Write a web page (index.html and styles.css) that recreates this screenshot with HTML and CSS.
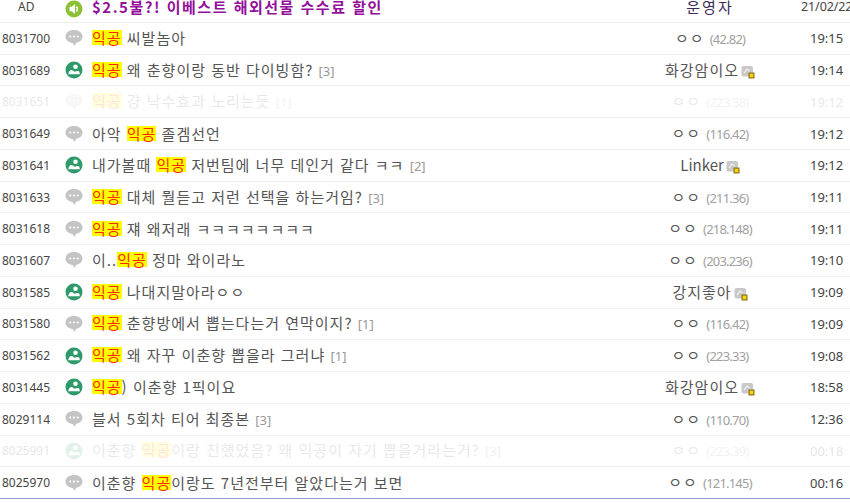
FILE: index.html
```html
<!DOCTYPE html>
<html lang="ko">

<head>
    <meta charset="UTF-8">
    <title>게시글 목록</title>
    <link rel="stylesheet" href="styles.css">
</head>

<body>
    <svg class="defs" width="0" height="0">
        <symbol id="icon-talk" viewBox="0 0 18 18">
            <path d="M9 1C4.2 1 .5 3.6.5 7.6c0 3.6 3.2 6.2 7 6.5l2.6 3 .6-3.1c3.8-.5 6.8-3 6.8-6.4C17.500 3.600 13.800 1 9 1z" fill="#c4c4c4"/>
            <circle cx="5.200" cy="7.500" r="1.100" fill="#fff"/>
            <circle cx="9" cy="7.500" r="1.100" fill="#fff"/>
            <circle cx="12.800" cy="7.500" r="1.100" fill="#fff"/>
        </symbol>
        <symbol id="icon-pic" viewBox="0 0 18 18">
            <circle cx="9" cy="9" r="8.500" fill="#2f9a69"/>
            <circle cx="10.500" cy="5.800" r="2.300" fill="#fff"/>
            <path d="M3.200 13.300c.3-2.100 1.700-4.200 3.300-4.200 1.100 0 1.700 1 2.500 1.400 1.400.6 2.800-.9 4.300-.5 1.100.3 1.500 1.900 1.500 3.300z" fill="#fff"/>
        </symbol>
        <symbol id="icon-sound" viewBox="0 0 18 18">
            <circle cx="9" cy="9" r="8.500" fill="#8cc036"/>
            <path d="M4.500 6.800h2.300L10 4v10l-3.200-2.800H4.500z" fill="#fff"/>
            <path d="M11.500 6.500c1 1.400 1 3.600 0 5" stroke="#fff" stroke-width="1.300" fill="none"/>
        </symbol>
        <symbol id="icon-nick" viewBox="0 0 14 14">
            <rect x="0.500" y="1" width="11.500" height="10.500" rx="2" fill="#c9c9c9"/>
            <path d="M3 8l3-4 2.500 2" stroke="#f4f4f4" stroke-width="1.200" fill="none"/>
            <rect x="7.500" y="7.500" width="6" height="6" fill="#8a7420"/>
            <rect x="8.700" y="8.700" width="3.600" height="3.600" fill="#ffd400"/>
        </symbol>
    </svg>

    <div class="board">
        <div class="row head">
            <div class="num">AD</div>
            <svg class="icon"><use href="#icon-sound"/></svg>
            <div class="title ad">$2.5불?! 이베스트 해외선물 수수료 할인</div>
            <div class="author op">운영자</div>
            <div class="time">21/02/22</div>
        </div>
        <div class="row">
            <div class="num">8031700</div>
            <svg class="icon"><use href="#icon-talk"/></svg>
            <div class="title"><mark>익공</mark> 씨발놈아</div>
            <div class="author">ㅇㅇ <span class="ip">(42.82)</span></div>
            <div class="time">19:15</div>
        </div>
        <div class="row">
            <div class="num">8031689</div>
            <svg class="icon"><use href="#icon-pic"/></svg>
            <div class="title"><mark>익공</mark> 왜 춘향이랑 동반 다이빙함? <span class="reply">[3]</span></div>
            <div class="author">화강암이오<svg class="nick"><use href="#icon-nick"/></svg></div>
            <div class="time">19:14</div>
        </div>
        <div class="row faded">
            <div class="num">8031651</div>
            <svg class="icon"><use href="#icon-talk"/></svg>
            <div class="title"><mark>익공</mark> 걍 낙수효과 노리는듯 <span class="reply">[1]</span></div>
            <div class="author">ㅇㅇ <span class="ip">(223.38)</span></div>
            <div class="time">19:12</div>
        </div>
        <div class="row">
            <div class="num">8031649</div>
            <svg class="icon"><use href="#icon-talk"/></svg>
            <div class="title">아악 <mark>익공</mark> 졸겜선언</div>
            <div class="author">ㅇㅇ <span class="ip">(116.42)</span></div>
            <div class="time">19:12</div>
        </div>
        <div class="row">
            <div class="num">8031641</div>
            <svg class="icon"><use href="#icon-pic"/></svg>
            <div class="title">내가볼때 <mark>익공</mark> 저번팀에 너무 데인거 같다 ㅋㅋ <span class="reply">[2]</span></div>
            <div class="author"><span class="latin">Linker</span><svg class="nick"><use href="#icon-nick"/></svg></div>
            <div class="time">19:12</div>
        </div>
        <div class="row">
            <div class="num">8031633</div>
            <svg class="icon"><use href="#icon-talk"/></svg>
            <div class="title"><mark>익공</mark> 대체 뭘듣고 저런 선택을 하는거임? <span class="reply">[3]</span></div>
            <div class="author">ㅇㅇ <span class="ip">(211.36)</span></div>
            <div class="time">19:11</div>
        </div>
        <div class="row">
            <div class="num">8031618</div>
            <svg class="icon"><use href="#icon-talk"/></svg>
            <div class="title"><mark>익공</mark> 쟤 왜저래 ㅋㅋㅋㅋㅋㅋㅋㅋ</div>
            <div class="author">ㅇㅇ <span class="ip">(218.148)</span></div>
            <div class="time">19:11</div>
        </div>
        <div class="row">
            <div class="num">8031607</div>
            <svg class="icon"><use href="#icon-talk"/></svg>
            <div class="title">이..<mark>익공</mark> 정마 와이라노</div>
            <div class="author">ㅇㅇ <span class="ip">(203.236)</span></div>
            <div class="time">19:10</div>
        </div>
        <div class="row">
            <div class="num">8031585</div>
            <svg class="icon"><use href="#icon-pic"/></svg>
            <div class="title"><mark>익공</mark> 나대지말아라ㅇㅇ</div>
            <div class="author">강지좋아<svg class="nick"><use href="#icon-nick"/></svg></div>
            <div class="time">19:09</div>
        </div>
        <div class="row">
            <div class="num">8031580</div>
            <svg class="icon"><use href="#icon-talk"/></svg>
            <div class="title"><mark>익공</mark> 춘향방에서 뽑는다는거 연막이지? <span class="reply">[1]</span></div>
            <div class="author">ㅇㅇ <span class="ip">(116.42)</span></div>
            <div class="time">19:09</div>
        </div>
        <div class="row">
            <div class="num">8031562</div>
            <svg class="icon"><use href="#icon-pic"/></svg>
            <div class="title"><mark>익공</mark> 왜 자꾸 이춘향 뽑을라 그러냐 <span class="reply">[1]</span></div>
            <div class="author">ㅇㅇ <span class="ip">(223.33)</span></div>
            <div class="time">19:08</div>
        </div>
        <div class="row">
            <div class="num">8031445</div>
            <svg class="icon"><use href="#icon-pic"/></svg>
            <div class="title"><mark>익공</mark>) 이춘향 1픽이요</div>
            <div class="author">화강암이오<svg class="nick"><use href="#icon-nick"/></svg></div>
            <div class="time">18:58</div>
        </div>
        <div class="row">
            <div class="num">8029114</div>
            <svg class="icon"><use href="#icon-talk"/></svg>
            <div class="title">블서 5회차 티어 최종본 <span class="reply">[3]</span></div>
            <div class="author">ㅇㅇ <span class="ip">(110.70)</span></div>
            <div class="time">12:36</div>
        </div>
        <div class="row faded">
            <div class="num">8025991</div>
            <svg class="icon"><use href="#icon-pic"/></svg>
            <div class="title">이춘향 <mark>익공</mark>이랑 친했었음? 왜 익공이 자기 뽑을거라는거? <span class="reply">[3]</span></div>
            <div class="author">ㅇㅇ <span class="ip">(223.39)</span></div>
            <div class="time">00:18</div>
        </div>
        <div class="row last">
            <div class="num">8025970</div>
            <svg class="icon"><use href="#icon-talk"/></svg>
            <div class="title">이춘향 <mark>익공</mark>이랑도 7년전부터 알았다는거 보면</div>
            <div class="author">ㅇㅇ <span class="ip">(121.145)</span></div>
            <div class="time">00:16</div>
        </div>
    </div>
</body>

</html>
```

FILE: styles.css
```css
body {
    margin: 0;
    background-color: #ffffff;
    overflow: hidden;
    font-family: "Noto Sans CJK KR", "Noto Sans", sans-serif;
    color: #333333;
}
.defs {
    display: block;
    height: 0;
}
.board {
    width: 860px;
    height: 499px;
    display: grid;
    grid-template-rows: 23px repeat(15, 1fr);
}
.row {
    display: grid;
    grid-template-columns: 65px 27px 1fr 130px 82px;
    align-items: center;
    border-bottom: 1px solid #eeeeee;
    min-width: 0;
    overflow: hidden;
}
.row.head {
    height: 14px;
    padding-bottom: 8px;
    line-height: 14px;
}
.head .title,
.head .author {
    line-height: 14px;
}
.head .icon {
    align-self: start;
    margin-bottom: -4px;
}
.row.last {
    border-bottom: 1px solid #8f95cf;
}
.faded > * {
    opacity: 0.13;
}
.num {
    padding-left: 2px;
    font-family: "Noto Sans", sans-serif;
    font-size: 12px;
    color: #444444;
}
.head .num {
    padding-left: 18px;
}
.icon {
    width: 18px;
    height: 18px;
}
.title {
    font-size: 15px;
    line-height: 20px;
    letter-spacing: 1px;
    color: #555555;
    white-space: nowrap;
}
.title.ad {
    font-weight: bold;
    color: #93109a;
    letter-spacing: 1.5px;
}
mark {
    display: inline-block;
    height: 15px;
    line-height: 15px;
    background-color: #ffff00;
    color: #ff2a00;
}
.reply {
    font-family: "Noto Sans", sans-serif;
    font-size: 13px;
    letter-spacing: 0;
    color: #999999;
}
.author {
    font-size: 15px;
    line-height: 20px;
    text-align: center;
    white-space: nowrap;
    color: #555555;
    letter-spacing: 1px;
    padding-right: 6px;
}
.author.op {
    color: #3a2a55;
    letter-spacing: 2px;
}
.latin {
    letter-spacing: 0;
}
.ip {
    font-family: "Noto Sans", sans-serif;
    font-size: 13px;
    letter-spacing: -0.8px;
    color: #a0a0a0;
}
.nick {
    width: 14px;
    height: 14px;
    margin-left: 2px;
    vertical-align: -3px;
}
.time {
    font-family: "Noto Sans", sans-serif;
    font-size: 13px;
    color: #444444;
    padding-left: 32px;
}
.head .time {
    padding-left: 23px;
    font-size: 12.5px;
    letter-spacing: -0.1px;
}
```
